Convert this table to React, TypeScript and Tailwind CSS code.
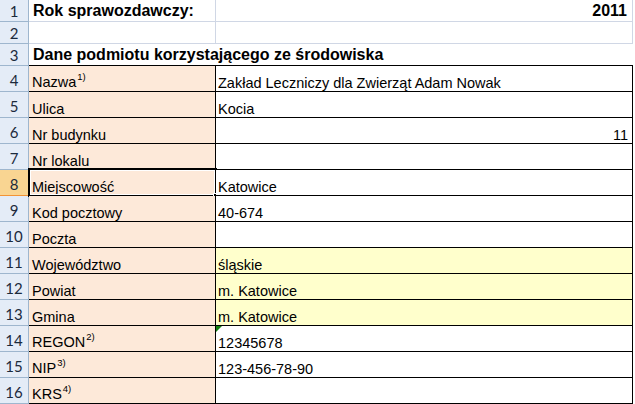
import React from "react";

type Row = {
  n: number;
  a?: React.ReactNode;
  b?: string;
  bRight?: boolean;
  yellow?: boolean;
  triangle?: boolean;
};

const Sup = ({ t }: { t: string }) => (
  <span className="text-[9.5px] relative top-[-7px] ml-[1px]">{t}</span>
);

const rows: Row[] = [
  { n: 4, a: <>Nazwa<Sup t="1)" /></>, b: "Zakład Leczniczy dla Zwierząt Adam Nowak" },
  { n: 5, a: "Ulica", b: "Kocia" },
  { n: 6, a: "Nr budynku", b: "11", bRight: true },
  { n: 7, a: "Nr lokalu", b: "" },
  { n: 8, a: "Miejscowość", b: "Katowice" },
  { n: 9, a: "Kod pocztowy", b: "40-674" },
  { n: 10, a: "Poczta", b: "" },
  { n: 11, a: "Województwo", b: "śląskie", yellow: true },
  { n: 12, a: "Powiat", b: "m. Katowice", yellow: true },
  { n: 13, a: "Gmina", b: "m. Katowice", yellow: true },
  { n: 14, a: <>REGON<Sup t="2)" /></>, b: "12345678", triangle: true },
  { n: 15, a: <>NIP<Sup t="3)" /></>, b: "123-456-78-90" },
  { n: 16, a: <>KRS<Sup t="4)" /></>, b: "" },
];

function Header({ n, selected, tall }: { n: number; selected?: boolean; tall?: boolean }) {
  return (
    <div
      className={
        "w-[29px] shrink-0 flex justify-center border-r border-b text-[15px] leading-[16px] " +
        (tall ? "items-end pb-[3px] " : "items-center ") +
        (selected
          ? "bg-[#F9D592] border-b-[#F29436] border-r-[#F29436] text-[#1b2a3c]"
          : "bg-[#E4ECF7] border-r-[#9EB6CE] border-b-[#9EB6CE] text-[#1b2a3c]")
      }
      style={{ fontFamily: "Lato, 'Liberation Sans', sans-serif" }}
    >
      {n}
    </div>
  );
}

export default function App() {
  return (
    <div
      className="w-[635px] h-[404px] overflow-hidden bg-white text-black"
      style={{ fontFamily: "'Liberation Sans', Arial, sans-serif" }}
    >
      {/* Row 1 */}
      <div className="flex h-[22px]">
        <Header n={1} />
        <div className="w-[187px] shrink-0 border-r border-b border-[#D0D7E5] flex items-center pl-[4px] pt-[1px] font-bold text-[16px] whitespace-nowrap">
          Rok sprawozdawczy:
        </div>
        <div className="w-[417px] shrink-0 border-r border-b border-[#D0D7E5] flex items-center justify-end pr-[5px] pt-[1px] font-bold text-[16px]">
          2011
        </div>
      </div>
      {/* Row 2 */}
      <div className="flex h-[22px]">
        <Header n={2} />
        <div className="w-[187px] shrink-0 border-r border-b border-[#D0D7E5]" />
        <div className="w-[417px] shrink-0 border-r border-b border-[#D0D7E5]" />
      </div>
      {/* Row 3 */}
      <div className="flex h-[22px]">
        <Header n={3} />
        <div className="flex-none w-[604px] border-b border-black flex items-center pl-[4px] pt-[1px] font-bold text-[16px] whitespace-nowrap">
          Dane podmiotu korzystającego ze środowiska
        </div>
      </div>
      {rows.map((r) => (
        <div key={r.n} className="flex h-[26px]">
          <Header n={r.n} selected={r.n === 8} tall />
          <div className="relative w-[187px] shrink-0 bg-[#FDE9D9] border-r border-b border-black flex items-end pl-[3px] text-[14.5px] leading-[15px] whitespace-nowrap">
            <span>{r.a}</span>
            {r.n === 8 && (
              <>
                <div className="absolute left-[-1px] top-[-2px] right-[-2px] bottom-[-2px] border-2 border-black">
                  <div className="w-full h-full border border-white" />
                </div>
                <div className="absolute right-[-4px] bottom-[-4px] w-[6px] h-[6px] bg-black border border-white" />
              </>
            )}
          </div>
          <div
            className={
              "relative w-[417px] shrink-0 border-r border-b border-black flex items-end text-[14.5px] leading-[15px] whitespace-nowrap " +
              (r.yellow ? "bg-[#FFFFCC] " : "bg-white ") +
              (r.bRight ? "justify-end pr-[4px]" : "pl-[2px]")
            }
          >
            {r.triangle && (
              <div className="absolute left-0 top-0 w-0 h-0 border-t-[6px] border-t-[#108010] border-r-[6px] border-r-transparent" />
            )}
            <span>{r.b}</span>
          </div>
        </div>
      ))}
    </div>
  );
}
